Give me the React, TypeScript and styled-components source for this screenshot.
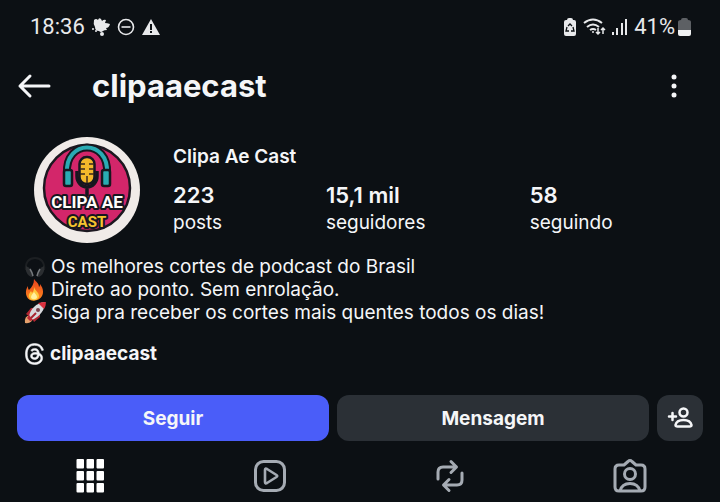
import React from 'react';
import styled, { createGlobalStyle } from 'styled-components';

const Global = createGlobalStyle`
  * { box-sizing: border-box; }
  body { margin: 0; background: #0c1014; color: #f5f6f8; font-family: Inter, "Noto Sans", sans-serif; }
  button, a { font: inherit; color: inherit; text-decoration: none; }
  svg { display: block; flex: none; }
`;

const Screen = styled.main`
  display: flex;
  flex-direction: column;
  background: #0c1014;
`;

const StatusBar = styled.div`
  display: flex;
  justify-content: space-between;
  align-items: center;
  height: 54px;
  padding: 0 29px 0 30px;
  font: 400 22px/26px Roboto, sans-serif;
  color: #e8e9eb;
`;

const StatusGroup = styled.div<{ $gap: number }>`
  display: flex;
  align-items: center;
  gap: ${(p) => p.$gap}px;
`;

const Header = styled.header`
  display: flex;
  align-items: center;
  height: 64px;
  padding: 0 28px 0 16px;
`;

const IconButton = styled.button`
  display: flex;
  padding: 0;
  border: 0;
  background: none;
  cursor: pointer;
`;

const Username = styled.h1`
  flex: 1;
  margin: 0 0 0 40px;
  font-size: 31px;
  line-height: 38px;
  font-weight: 700;
`;

const Profile = styled.section`
  display: flex;
  gap: 32px;
  padding: 19px 17px 0 33px;
`;

const Details = styled.div`
  flex: 1;
  padding-top: 6px;
`;

const DisplayName = styled.h2`
  margin: 0;
  font-size: 19px;
  line-height: 28px;
  font-weight: 600;
`;

const Stats = styled.div`
  display: grid;
  grid-template-columns: 30fr 40fr 34fr;
  padding-top: 10px;
`;

const Stat = styled.a`
  display: flex;
  flex-direction: column;
  font-size: 19px;
  line-height: 28px;
`;

const StatValue = styled.strong`
  font-size: 22px;
  font-weight: 600;
`;

const Bio = styled.section`
  padding: 10px 17px 0 24px;
  font-size: 19px;
  line-height: 23px;
`;

const BioLine = styled.p`
  display: flex;
  align-items: center;
  gap: 5px;
  margin: 0;
`;

const ThreadsLink = styled.a`
  display: inline-flex;
  align-items: center;
  gap: 5px;
  margin-top: 17px;
  line-height: 26px;
  font-weight: 700;
`;

const Actions = styled.div`
  display: flex;
  gap: 8px;
  padding: 25px 17px 0;
`;

const Action = styled.button<{ $primary?: boolean; $square?: boolean }>`
  display: flex;
  align-items: center;
  justify-content: center;
  flex: ${(p) => (p.$square ? '0 0 46px' : '1 1 0')};
  height: 46px;
  padding: 0;
  border: 0;
  border-radius: 12px;
  background: ${(p) => (p.$primary ? '#4a5df9' : '#2b3036')};
  font-size: 19px;
  font-weight: 700;
  cursor: pointer;
`;

const Tabs = styled.nav`
  display: grid;
  grid-template-columns: repeat(4, 1fr);
  padding-top: 9px;
`;

const Tab = styled.button<{ $active?: boolean }>`
  display: flex;
  justify-content: center;
  align-items: center;
  height: 52px;
  padding: 0;
  border: 0;
  background: none;
  color: ${(p) => (p.$active ? '#ffffff' : '#a5abb3')};
  cursor: pointer;
`;

const LogoText = styled.text`
  font-family: Roboto, sans-serif;
  font-weight: 700;
  text-anchor: middle;
  paint-order: stroke;
  stroke: #17171f;
  stroke-width: 4px;
  stroke-linejoin: round;
`;

const Avatar = () => (
  <svg width="108" height="108" viewBox="0 0 108 108" role="img" aria-label="Clipa Ae Cast">
    <circle cx="54" cy="53" r="53" fill="#f0ebe8" />
    <circle cx="54" cy="51" r="43" fill="#d3266a" stroke="#1c1820" strokeWidth="2.5" />
    <path d="M34 36C32 2 76 2 74 36" fill="none" stroke="#17171f" strokeWidth="8" />
    <path d="M34 36C32 2 76 2 74 36" fill="none" stroke="#2aabb3" strokeWidth="4" />
    <path d="M44 34v5a10 11 0 0 0 20 0v-5M54 50v9" fill="none" stroke="#17171f" strokeWidth="3.5" />
    <rect x="46.500" y="20" width="15" height="27" rx="7" fill="#f4b82b" stroke="#17171f" strokeWidth="2.500" />
    <path d="M47 27h5M56 27h5M47 32h5M56 32h5M47 37h5M56 37h5M54 39v7" stroke="#3a281c" strokeWidth="1.500" />
    <rect x="31" y="33" width="8" height="16" rx="2" fill="#2aabb3" stroke="#17171f" strokeWidth="2.500" />
    <rect x="69" y="33" width="8" height="16" rx="2" fill="#2aabb3" stroke="#17171f" strokeWidth="2.500" />
    <LogoText x="54" y="71" fontSize="17" fill="#fffdf9">CLIPA AE</LogoText>
    <LogoText x="54" y="90" fontSize="15" fill="#f7c42f">CAST</LogoText>
  </svg>
);

const ThreadsIcon = () => (
  <svg width="21" height="22" viewBox="0 0 192 192" preserveAspectRatio="xMidYMid meet" fill="currentColor" stroke="currentColor" strokeWidth="5">
    <path d="M141.537 88.988a66.667 66.667 0 0 0-2.518-1.143c-1.482-27.307-16.403-42.94-41.457-43.1h-.34c-14.986 0-27.449 6.396-35.12 18.036l13.779 9.452c5.73-8.695 14.724-10.548 21.348-10.548h.229c8.249.053 14.474 2.452 18.503 7.129 2.932 3.405 4.893 8.111 5.864 14.05-7.314-1.243-15.224-1.626-23.68-1.14-23.82 1.371-39.134 15.264-38.105 34.568.522 9.792 5.4 18.216 13.735 23.719 7.047 4.652 16.124 6.927 25.557 6.412 12.458-.683 22.231-5.436 29.049-14.127 5.178-6.6 8.453-15.153 9.899-25.93 5.937 3.583 10.337 8.298 12.767 13.966 4.132 9.635 4.373 25.468-8.546 38.376-11.319 11.308-24.925 16.2-45.488 16.351-22.809-.169-40.06-7.484-51.275-21.742C35.236 139.966 29.808 120.682 29.605 96c.203-24.682 5.63-43.966 16.133-57.317C56.954 24.425 74.204 17.11 97.013 16.94c22.975.17 40.526 7.52 52.171 21.847 5.71 7.026 10.015 15.86 12.853 26.162l16.147-4.308c-3.44-12.68-8.853-23.606-16.219-32.668C147.036 9.607 125.202.195 97.07 0h-.113C68.882.194 47.292 9.642 32.788 28.08 19.882 44.485 13.224 67.315 13.001 95.932L13 96v.067c.224 28.617 6.882 51.447 19.788 67.854C47.292 182.358 68.882 191.806 96.957 192h.113c24.96-.173 42.554-6.708 57.048-21.189 18.963-18.945 18.392-42.692 12.142-57.27-4.484-10.454-13.033-18.945-24.723-24.553ZM98.44 129.507c-10.44.588-21.286-4.098-21.82-14.135-.397-7.442 5.296-15.746 22.461-16.735 1.966-.114 3.895-.169 5.79-.169 6.235 0 12.068.606 17.371 1.765-1.978 24.702-13.58 28.713-23.802 29.274Z" />
  </svg>
);

const Headphones = () => (
  <svg width="22" height="22" viewBox="0 0 22 22">
    <path d="M2 14C-1-2 23-2 20 14" fill="none" stroke="#1c1f22" strokeWidth="2" />
    <path d="M2 10q6 2 7 11q-5 0-7-6Z" fill="#2b2e31" />
    <path d="M20 10q-6 2-7 11q5 0 7-6Z" fill="#2b2e31" />
    <path d="M6 13q2 3 3 7M16 13q-2 3-3 7" fill="none" stroke="#75797c" strokeWidth="1.500" />
  </svg>
);

const Fire = () => (
  <svg width="22" height="22" viewBox="0 0 22 22">
    <defs>
      <linearGradient id="flame" x1="0" y1="0" x2="0" y2="1">
        <stop offset="0" stopColor="#e8421f" />
        <stop offset="1" stopColor="#ff8a1c" />
      </linearGradient>
    </defs>
    <path d="M10 0c2 3 5 4 5 8 1-1 1-2 1-3 3 4 4 8 2 12-3 6-13 6-15 1C1 14 2 10 4 7c0 2 0 3 1 4 3-3 5-6 5-11Z" fill="url(#flame)" />
    <path d="M10 8c1 4 5 5 5 9 0 5-9 6-10 1-1-3 1-4 2-6l1 2c2-2 2-4 2-6Z" fill="#ffc83d" />
    <path d="M10 13c1 2 3 3 3 5 0 3-6 3-6 0 0-2 2-3 3-5Z" fill="#fff0a0" />
  </svg>
);

const Rocket = () => (
  <svg width="22" height="22" viewBox="0 0 22 22">
    <path d="M6 13q-6 1-5 8 7 1 8-5Z" fill="#e5a06c" />
    <path d="M2 12l5-6 5 0-6 9ZM10 20l6-5v-5l-8 6Z" fill="#b32632" />
    <path d="M5 15C6 7 12 1 21 0c0 8-5 14-13 18Z" fill="#d9dade" />
    <path d="M14 1q4-1 8-1 0 4-2 7Z" fill="#db303e" />
    <circle cx="14" cy="8" r="2" fill="#7a3f4b" />
    <path d="M5 13l4 5-3 1-3-3Z" fill="#bd2937" />
    <path d="M7 16l5-5" stroke="#a92431" strokeWidth="2" />
  </svg>
);

export default function App() {
  return (
    <>
      <Global />
      <Screen>
        <StatusBar>
          <StatusGroup $gap={6}>
            <span>18:36</span>
            <svg width="20" height="20" viewBox="0 0 20 20" fill="currentColor">
              <path d="M3 3q2-2 4 0 1-3 3-1l1 2q2-2 4-1l-1 3q2 0 5 1-1 4-4 4l1 2q-3 0-4 1-2 2-4 0-4 0-4-4-2-3-1-7Z" />
              <circle cx="2" cy="12" r="1" /><circle cx="11" cy="17" r="2" /><circle cx="5" cy="14" r="1" />
            </svg>
            <svg width="18" height="18" viewBox="0 0 18 18" fill="none" stroke="currentColor" strokeWidth="1.600">
              <circle cx="9" cy="9" r="7.500" /><path d="M4.500 9h9" />
            </svg>
            <svg width="20" height="18" viewBox="0 0 20 18">
              <path d="M10 1L19 17H1Z" fill="currentColor" />
              <path d="M10 6v6M10 13v2" stroke="#0c1014" strokeWidth="2" />
            </svg>
          </StatusGroup>
          <StatusGroup $gap={6}>
            <svg width="14" height="18" viewBox="0 0 14 18">
              <path d="M4 2q0-2 2-2h2q2 0 2 2h1q2 0 2 2v12q0 2-2 2H3q-2 0-2-2V4q0-2 2-2Z" fill="currentColor" />
              <path d="M5 8l2-2 2 2M10 9l1 4H8M6 13H3l1-4" fill="none" stroke="#0c1014" strokeWidth="1.300" />
            </svg>
            <svg width="23" height="18" viewBox="0 0 23 18" fill="none" stroke="currentColor" strokeWidth="2">
              <path d="M1 5q9-7 18 0M4 9q6-5 12 0M7 12q3-2 6 0" />
              <circle cx="10" cy="14" r="1" fill="currentColor" stroke="none" />
              <path d="M15 10v6M13 14l2 2 2-2M20 16v-6M18 12l2-2 2 2" strokeWidth="1.500" />
            </svg>
            <svg width="16" height="18" viewBox="0 0 16 18" fill="currentColor">
              <path d="M0 14h2v3H0ZM4 10h2v7H4ZM9 5h2v12H9ZM13 1h2v16h-2Z" />
            </svg>
            <StatusGroup $gap={3}>
              <span>41%</span>
              <svg width="13" height="18" viewBox="0 0 13 18">
                <path d="M3 2q0-2 2-2h3q2 0 2 2 3 0 3 2v8H0V4q0-2 3-2Z" fill="#5d6064" />
                <path d="M0 12h13v4q0 2-2 2H2q-2 0-2-2Z" fill="#f0f1f2" />
              </svg>
            </StatusGroup>
          </StatusGroup>
        </StatusBar>

        <Header>
          <IconButton aria-label="Voltar">
            <svg width="36" height="28" viewBox="0 0 36 28" fill="none" stroke="#f5f6f8" strokeWidth="3" strokeLinecap="round" strokeLinejoin="round">
              <path d="M14 4L4 14l10 10M4 14h29" />
            </svg>
          </IconButton>
          <Username>clipaaecast</Username>
          <IconButton aria-label="Mais opções">
            <svg width="36" height="28" viewBox="0 0 36 28" fill="#f5f6f8">
              <circle cx="18" cy="5" r="2.500" /><circle cx="18" cy="14" r="2.500" /><circle cx="18" cy="23" r="2.500" />
            </svg>
          </IconButton>
        </Header>

        <Profile>
          <Avatar />
          <Details>
            <DisplayName>Clipa Ae Cast</DisplayName>
            <Stats>
              <Stat href="#posts"><StatValue>223</StatValue>posts</Stat>
              <Stat href="#seguidores"><StatValue>15,1 mil</StatValue>seguidores</Stat>
              <Stat href="#seguindo"><StatValue>58</StatValue>seguindo</Stat>
            </Stats>
          </Details>
        </Profile>

        <Bio>
          <BioLine><Headphones />Os melhores cortes de podcast do Brasil</BioLine>
          <BioLine><Fire />Direto ao ponto. Sem enrolação.</BioLine>
          <BioLine><Rocket />Siga pra receber os cortes mais quentes todos os dias!</BioLine>
          <ThreadsLink href="#threads"><ThreadsIcon />clipaaecast</ThreadsLink>
        </Bio>

        <Actions>
          <Action $primary>Seguir</Action>
          <Action>Mensagem</Action>
          <Action $square aria-label="Sugestões">
            <svg width="26" height="24" viewBox="0 0 26 24" fill="none" stroke="#f5f6f8" strokeWidth="2.500" strokeLinecap="round" strokeLinejoin="round">
              <circle cx="16.500" cy="6.500" r="4" />
              <path d="M8.500 19q1-5 8-5t8 5q0 1.500-2 1.500h-12q-2 0-2-1.500ZM2 10.500h7M5.500 7v7" />
            </svg>
          </Action>
        </Actions>

        <Tabs>
          <Tab $active aria-label="Publicações">
            <svg width="28" height="34" viewBox="0 0 28 34" fill="currentColor">
              {[0, 12, 24].map((y) => [0, 10, 20].map((x) => (
                <rect key={`${x}-${y}`} x={x + 0.5} y={y} width="7.500" height="9.500" rx="1" />
              )))}
            </svg>
          </Tab>
          <Tab aria-label="Reels">
            <svg width="34" height="34" viewBox="0 0 34 34" fill="none" stroke="currentColor" strokeWidth="3" strokeLinejoin="round">
              <rect x="2.500" y="2.500" width="29" height="29" rx="8" />
              <path d="M12 11v12q0 2 2 1l9.500-6q1.500-1 0-2L14 10q-2-1-2 1Z" strokeWidth="2.600" />
            </svg>
          </Tab>
          <Tab aria-label="Republicações">
            <svg width="34" height="36" viewBox="0 0 34 36" fill="none" stroke="currentColor" strokeWidth="3" strokeLinecap="round" strokeLinejoin="round">
              <path d="M5 21v-7q0-5 5-5h12M18 3.500L23.500 9 18 14.500M29 15v7q0 5-5 5H12M16 21.500L10.500 27l5.500 5.500" />
            </svg>
          </Tab>
          <Tab aria-label="Marcações">
            <svg width="34" height="36" viewBox="0 0 34 36" fill="none" stroke="currentColor" strokeWidth="3" strokeLinejoin="round">
              <path d="M6 7h5l4-3.500q2-2 4 0L23 7h5q4 0 4 4v18q0 4-4 4H6q-4 0-4-4V11q0-4 4-4Z" />
              <circle cx="17" cy="16" r="5.500" />
              <path d="M7 33q2-7.500 10-7.500T27 33" />
            </svg>
          </Tab>
        </Tabs>
      </Screen>
    </>
  );
}
